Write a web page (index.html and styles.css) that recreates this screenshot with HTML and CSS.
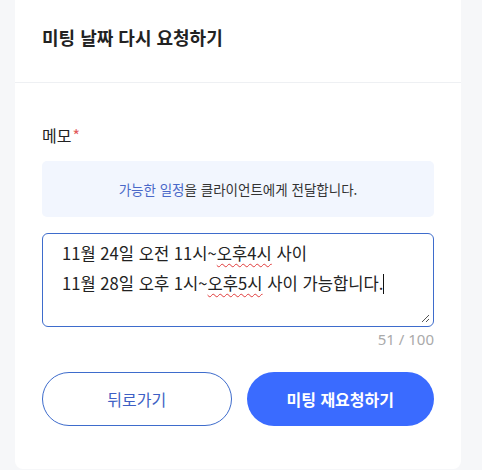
FILE: index.html
```html
<!DOCTYPE html>
<html lang="ko">
<head>
<meta charset="utf-8">
<link rel="stylesheet" href="styles.css">
</head>
<body>
<div class="card">
  <div class="header">
    <h1 class="title">미팅 날짜 다시 요청하기</h1>
  </div>
  <div class="content">
    <div class="label">메모<span class="req">*</span></div>
    <div class="notice"><span class="hl">가능한 일정</span>을 클라이언트에게 전달합니다.</div>
    <div class="textarea">
      <div class="line">11월 24일 오전 11시~<span class="sp">오후4시</span> 사이</div>
      <div class="line">11월 28일 오후 1시~<span class="sp">오후5시</span> 사이 가능합니다.<span class="caret"></span></div>
      <svg class="grip" width="9" height="9" viewBox="0 0 9 9"><path d="M8 1L1 8M8 5L5 8" stroke="#555" stroke-width="1" fill="none"/></svg>
    </div>
    <div class="count">51 / 100</div>
    <div class="actions">
      <button class="btn btn-outline">뒤로가기</button>
      <button class="btn btn-primary">미팅 재요청하기</button>
    </div>
  </div>
</div>
</body>
</html>
```
FILE: styles.css
```css
* { box-sizing: border-box; }
html, body { margin: 0; padding: 0; }
body {
  background: #f6f7f9;
  font-family: "Noto Sans CJK KR", "Noto Sans", sans-serif;
  color: #222;
  width: 482px;
  height: 470px;
  overflow: hidden;
}
.card {
  margin-left: 15px;
  width: 446px;
  height: 469px;
  background: #fff;
  border-radius: 0 0 8px 8px;
}
.header {
  height: 83px;
  border-bottom: 1px solid #eef0f3;
  padding: 25px 27px 0;
}
.title {
  margin: 0;
  font-size: 18px;
  font-weight: 700;
  line-height: 24px;
  color: #222;
}
.content {
  padding: 41px 27px 0;
}
.label {
  font-size: 16px;
  line-height: 22px;
  color: #222;
}
.req { color: #e25b5b; margin-left: 1px; }
.notice {
  margin-top: 15px;
  height: 56px;
  background: #f2f6fe;
  border-radius: 5px;
  display: flex;
  align-items: center;
  justify-content: center;
  font-size: 13.5px;
  color: #333;
}
.hl { color: #4a68c8; }
.textarea {
  position: relative;
  margin-top: 16px;
  height: 94px;
  border: 1px solid #3e6ccc;
  border-radius: 6px;
  padding: 4px 19px 0;
  font-size: 16.6px;
  line-height: 30px;
  color: #222;
}
.line { white-space: nowrap; }
.sp {
  text-decoration: underline wavy #e03b3b;
  text-decoration-thickness: 1px;
  text-underline-offset: 3px;
}
.caret {
  display: inline-block;
  width: 1px;
  height: 20px;
  background: #111;
  vertical-align: -4px;
}
.grip {
  position: absolute;
  right: 3px;
  bottom: 3px;
}
.count {
  text-align: right;
  font-size: 15px;
  line-height: 22px;
  margin-top: 1px;
  color: #aaa;
  font-family: "Noto Sans", sans-serif;
}
.actions {
  display: flex;
  gap: 15px;
  margin-top: 22px;
}
.btn {
  flex: 1;
  height: 54px;
  border-radius: 27px;
  font-family: "Noto Sans CJK KR", sans-serif;
  font-size: 16px;
  cursor: pointer;
}
.btn-outline {
  background: #fff;
  border: 1px solid #3e6ccc;
  color: #3e5fc4;
}
.btn-primary {
  background: #3a6bff;
  border: none;
  color: #fff;
  font-weight: 700;
}
```
